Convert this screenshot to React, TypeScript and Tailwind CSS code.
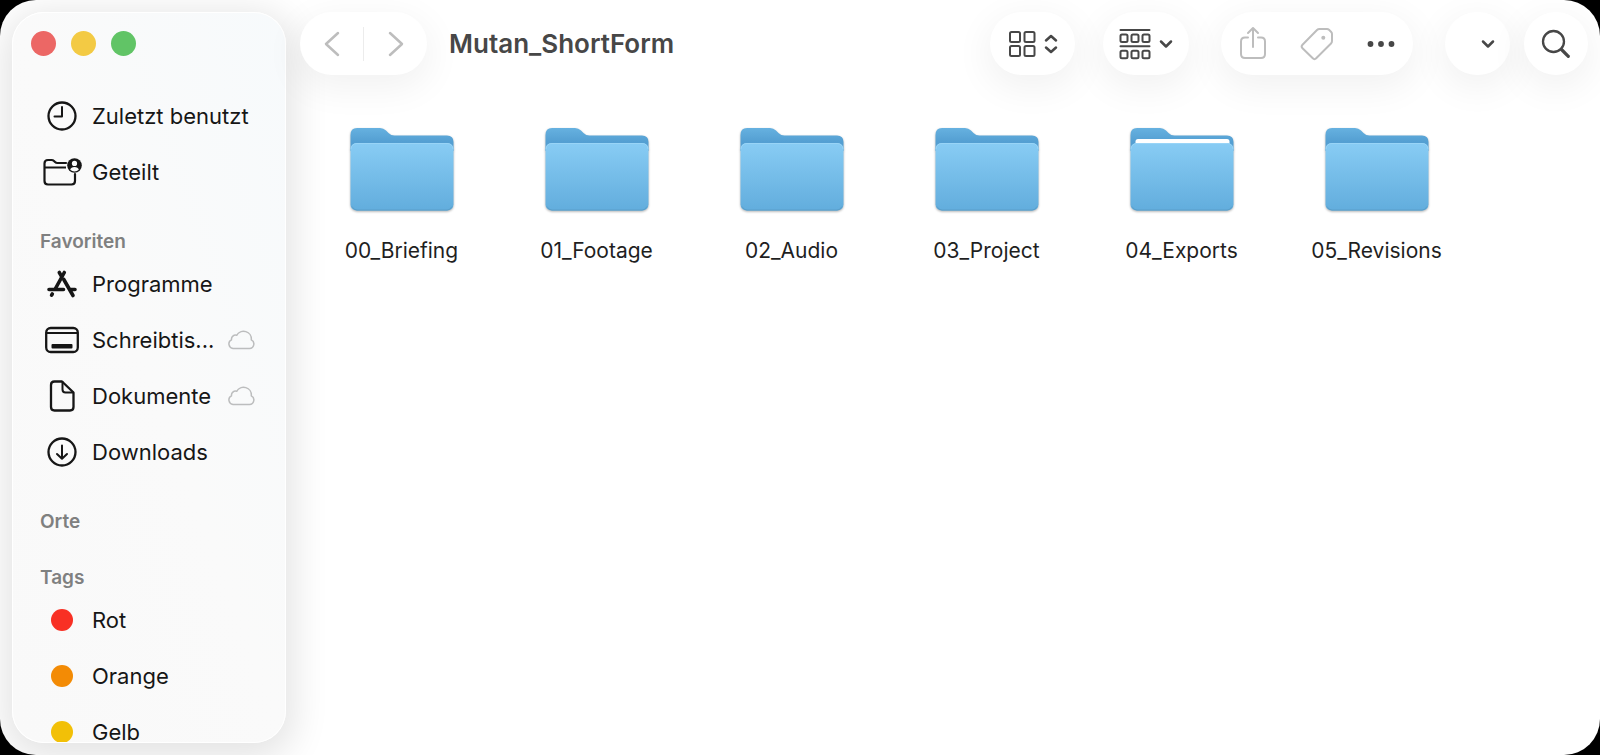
import type { ReactNode } from 'react'

const stroke = {
  fill: 'none',
  stroke: 'currentColor',
  strokeLinecap: 'round' as const,
  strokeLinejoin: 'round' as const,
  'aria-hidden': true,
}

function ClockIcon() {
  return (
    <svg width="32" height="32" viewBox="0 0 32 32" strokeWidth="2.3" {...stroke}>
      <circle cx="16" cy="16" r="13.5" />
      <path d="M16 7V16.500H8.500" strokeWidth="2" />
    </svg>
  )
}

function SharedFolderIcon() {
  return (
    <svg width="40" height="32" viewBox="0 0 40 32" strokeWidth="2.2" {...stroke}>
      <path d="M33 18V25Q33 28.5 29.5 28.5H6Q2.5 28.5 2.5 25V7.5Q2.5 4 6 4H9.5Q11 4 12 5L13 6Q14 7 15.5 7H24" />
      <path d="M3 11.5H24" strokeLinecap="butt" />
      <circle cx="32.5" cy="9.5" r="7.3" fill="currentColor" stroke="none" />
      <circle cx="32.5" cy="7.4" r="2.6" fill="#f9fafa" stroke="none" />
      <path d="M28.2 13.7Q29 11 32.5 11T36.8 13.7Q35 15.4 32.5 15.4T28.2 13.7Z" fill="#f9fafa" stroke="none" />
    </svg>
  )
}

function AppsIcon() {
  return (
    <svg width="32" height="32" viewBox="0 0 32 32" strokeWidth="3.6" {...stroke}>
      <path d="M13.3 4.5L15.7 8.6" />
      <path d="M18.3 4.5L9.5 20.5" />
      <path d="M3 21.5H17.5M25 21.5H29" />
      <path d="M17.8 11.5L27 27.5" />
      <path d="M5.6 27.2L6.3 26" />
    </svg>
  )
}

function DesktopIcon() {
  return (
    <svg width="36" height="32" viewBox="0 0 36 32" strokeWidth="2.3" {...stroke}>
      <rect x="2.2" y="4" width="31.6" height="24" rx="4.5" />
      <path d="M2.5 9H33.5" strokeWidth="2" strokeLinecap="butt" />
      <rect x="7.500" y="20" width="21" height="4.500" rx="1" fill="currentColor" stroke="none" />
    </svg>
  )
}

function DocumentIcon() {
  return (
    <svg width="32" height="34" viewBox="0 0 32 34" strokeWidth="2.3" {...stroke}>
      <path d="M8.5 2.5H16L27.5 13.5V28Q27.5 31.5 24 31.5H8.500Q5 31.5 5 28V6Q5 2.5 8.5 2.5Z" />
      <path d="M16.5 3V10.5Q16.5 13.5 19.5 13.5H27" strokeWidth="2" />
    </svg>
  )
}

function DownloadIcon() {
  return (
    <svg width="32" height="32" viewBox="0 0 32 32" strokeWidth="2.3" {...stroke}>
      <circle cx="16" cy="16" r="13.5" />
      <path d="M16 9.5V22.5M11 18L16 22.800L21 18" strokeWidth="2" />
    </svg>
  )
}

function CloudIcon() {
  return (
    <svg className="shrink-0 text-[#bcbdbe]" width="28" height="20" viewBox="0 0 28 20" strokeWidth="1.5" {...stroke}>
      <path d="M6 18.5H22.5A4.6 4.6 0 0 0 24.3 9.8A7.8 7.8 0 0 0 9.7 5.3A4.1 4.1 0 0 0 4.500 9.8A4.6 4.6 0 0 0 6 18.5Z" />
    </svg>
  )
}

function ChevronDown() {
  return (
    <svg width="14" height="10" viewBox="0 0 14 10" strokeWidth="2.5" {...stroke}>
      <path d="M2 2.5L7 7.5L12 2.5" />
    </svg>
  )
}

function GridIcon() {
  return (
    <svg width="28" height="28" viewBox="0 0 28 28" strokeWidth="2" {...stroke}>
      <rect x="2" y="2" width="10" height="10" rx="1.5" />
      <rect x="16.5" y="2" width="10" height="10" rx="1.5" />
      <rect x="2" y="16" width="10" height="10" rx="1.5" />
      <rect x="16.5" y="16" width="10" height="10" rx="1.5" />
    </svg>
  )
}

function SortIcon() {
  return (
    <svg width="14" height="20" viewBox="0 0 14 20" strokeWidth="2.5" {...stroke}>
      <path d="M2 6.5L7 2L12 6.5M2 13.5L7 18L12 13.5" />
    </svg>
  )
}

function GroupIcon() {
  return (
    <svg width="32" height="32" viewBox="0 0 32 32" strokeWidth="2" {...stroke}>
      <path d="M1.500 2H30.500M1.500 18.300H30.500" />
      <rect x="1.5" y="6.5" width="7" height="7.5" rx="1.5" />
      <rect x="12.5" y="6.5" width="7" height="7.5" rx="1.5" />
      <rect x="23.5" y="6.5" width="7" height="7.5" rx="1.5" />
      <rect x="1.5" y="22.8" width="7" height="7.5" rx="1.5" />
      <rect x="12.5" y="22.8" width="7" height="7.5" rx="1.5" />
      <rect x="23.5" y="22.8" width="7" height="7.5" rx="1.5" />
    </svg>
  )
}

function ShareIcon() {
  return (
    <svg width="28" height="36" viewBox="0 0 28 36" strokeWidth="2" {...stroke}>
      <path d="M9 11.500H6Q2 11.500 2 15.500V28Q2 32 6 32H22Q26 32 26 28V15.500Q26 11.500 22 11.500H19" />
      <path d="M14 21V2M9 7L14 2L19 7" />
    </svg>
  )
}

function TagIcon() {
  return (
    <svg width="34" height="34" viewBox="0 0 34 34" strokeWidth="2" {...stroke}>
      <path d="M19.5 2H27Q28.2 2 29 2.8L31.2 5Q32 5.8 32 7V14Q32 15.5 31 16.5L16.2 31.3Q14.5 33 12.8 31.3L2.5 21.2Q.8 19.5 2.5 17.8L17 3Q18 2 19.5 2Z" />
      <circle cx="23.3" cy="10.8" r="2" fill="currentColor" stroke="none" />
    </svg>
  )
}

function MoreIcon() {
  return (
    <svg width="28" height="8" viewBox="0 0 28 8" fill="currentColor" aria-hidden="true">
      <circle cx="3.5" cy="4" r="2.9" />
      <circle cx="14" cy="4" r="2.9" />
      <circle cx="24.5" cy="4" r="2.9" />
    </svg>
  )
}

function SearchIcon() {
  return (
    <svg width="30" height="30" viewBox="0 0 30 30" strokeWidth="2.3" {...stroke}>
      <circle cx="12.5" cy="12.5" r="10.5" />
      <path d="M20.500 20.500L27.300 27.300" strokeWidth="3.2" />
    </svg>
  )
}

function FolderIcon({ filled }: { filled?: boolean }) {
  return (
    <svg width="106" height="86" viewBox="0 0 106 86" className="drop-shadow-[0_1px_1px_rgba(0,0,0,0.3)]" aria-hidden="true">
      <defs>
        <linearGradient id="folder-back" x1="0" y1="0" x2="0" y2="1">
          <stop offset="0" stopColor="#66b1e0" />
          <stop offset="0.6" stopColor="#549fd2" />
        </linearGradient>
        <linearGradient id="folder-front" x1="0" y1="0" x2="0" y2="1">
          <stop offset="0" stopColor="#88ccf4" />
          <stop offset="1" stopColor="#62addd" />
        </linearGradient>
      </defs>
      <path d="M1.500 8Q1.500 1 8 1H31Q34.500 1 37 3.500L39.500 6Q42 8.500 45.500 8.500H98Q104.500 8.500 104.500 15V24H1.500Z" fill="url(#folder-back)" />
      {filled && <path d="M6.500 18V14.500Q6.500 12 9 12H98Q100.500 12 100.500 14.500V18Z" fill="#fff" />}
      <rect x="1.5" y="16" width="103" height="67.5" rx="6" fill="url(#folder-front)" />
      <path d="M2 22Q2.5 16.5 8 16.5H98Q103.5 16.5 104 22" fill="none" stroke="#98d4f7" strokeWidth="1" />
      <path d="M3 79.5Q4.500 83 8 83H98Q101.500 83 103 79.5" fill="none" stroke="#5a9fca" strokeWidth="1" />
    </svg>
  )
}

type Item = { label: string; icon: ReactNode; cloud?: boolean }

const recents: Item[] = [
  { label: 'Zuletzt benutzt', icon: <ClockIcon /> },
  { label: 'Geteilt', icon: <SharedFolderIcon /> },
]

const favorites: Item[] = [
  { label: 'Programme', icon: <AppsIcon /> },
  { label: 'Schreibtis...', icon: <DesktopIcon />, cloud: true },
  { label: 'Dokumente', icon: <DocumentIcon />, cloud: true },
  { label: 'Downloads', icon: <DownloadIcon /> },
]

const tags: Item[] = [
  { label: 'Rot', icon: <span className="size-[22px] rounded-full bg-[#f83024]" /> },
  { label: 'Orange', icon: <span className="size-[22px] rounded-full bg-[#f38b05]" /> },
  { label: 'Gelb', icon: <span className="size-[22px] rounded-full bg-[#f2c007]" /> },
]

const folders = ['00_Briefing', '01_Footage', '02_Audio', '03_Project', '04_Exports', '05_Revisions']

function SidebarSection({ title, items = [] }: { title?: string; items?: Item[] }) {
  return (
    <section>
      {title && (
        <h2 className="mt-7 flex h-7 items-center pl-[27px] text-[19px] font-semibold text-[#7f8080]">{title}</h2>
      )}
      <ul>
        {items.map((item) => (
          <li key={item.label}>
            <button type="button" className="flex h-14 w-full items-center pr-[30px] pl-[27px] text-left">
              <span className="flex w-11 shrink-0 justify-center">{item.icon}</span>
              <span className="ml-2 flex-1 whitespace-nowrap">{item.label}</span>
              {item.cloud && <CloudIcon />}
            </button>
          </li>
        ))}
      </ul>
    </section>
  )
}

function Pill({ children, className }: { children: ReactNode; className: string }) {
  return (
    <div className={`flex h-[63px] shrink-0 items-center rounded-full bg-white shadow-[0_10px_36px_4px_rgba(0,0,0,0.055)] ${className}`}>
      {children}
    </div>
  )
}

export default function App() {
  return (
    <div className="h-screen bg-black font-['Inter','Liberation_Sans',sans-serif]">
      <div className="flex h-full overflow-hidden rounded-[36px] bg-white">
        <aside className="my-3 ml-3 flex w-[274px] shrink-0 flex-col overflow-hidden rounded-[32px] border border-white bg-linear-to-bl from-[#f7fafc] via-[#fafafa] via-50% to-[#f9f9f9] text-[22px] text-[#161616] shadow-[0_8px_36px_8px_rgba(0,0,0,0.11)]">
          <div className="flex gap-[15px] pt-[18px] pl-[18px]">
            <button type="button" aria-label="Schließen" className="size-[25px] rounded-full bg-[#ec6765]" />
            <button type="button" aria-label="Minimieren" className="size-[25px] rounded-full bg-[#f3ca44]" />
            <button type="button" aria-label="Vergrößern" className="size-[25px] rounded-full bg-[#61c466]" />
          </div>
          <nav className="mt-8">
            <SidebarSection items={recents} />
            <SidebarSection title="Favoriten" items={favorites} />
            <SidebarSection title="Orte" />
            <SidebarSection title="Tags" items={tags} />
          </nav>
        </aside>

        <main className="min-w-0 flex-1">
          <header className="flex items-center pt-3 pr-3 pl-[14px] text-[#474747]">
            <Pill className="w-[127px] text-[#bdbdbd]">
              <button type="button" aria-label="Zurück" className="flex h-full flex-1 items-center justify-center">
                <svg width="16" height="26" viewBox="0 0 16 26" strokeWidth="2.5" {...stroke}>
                  <path d="M14 2L2 13L14 24" />
                </svg>
              </button>
              <span className="h-[34px] w-px bg-[#ececec]" />
              <button type="button" aria-label="Vorwärts" className="flex h-full flex-1 items-center justify-center">
                <svg width="16" height="26" viewBox="0 0 16 26" strokeWidth="2.5" {...stroke}>
                  <path d="M2 2L14 13L2 24" />
                </svg>
              </button>
            </Pill>
            <h1 className="ml-[22px] flex-1 text-[26px] font-semibold">Mutan_ShortForm</h1>
            <Pill className="mr-7 w-[85px]">
              <button type="button" aria-label="Darstellung" className="flex h-full w-full items-center justify-center gap-2">
                <GridIcon />
                <SortIcon />
              </button>
            </Pill>
            <Pill className="mr-8 w-[86px]">
              <button type="button" aria-label="Gruppieren" className="flex h-full w-full items-center justify-center gap-2">
                <GroupIcon />
                <ChevronDown />
              </button>
            </Pill>
            <Pill className="mr-8 w-[192px]">
              <button type="button" aria-label="Teilen" className="flex h-full flex-1 items-center justify-center text-[#bdbdbd]">
                <ShareIcon />
              </button>
              <button type="button" aria-label="Tags bearbeiten" className="flex h-full flex-1 items-center justify-center text-[#bdbdbd]">
                <TagIcon />
              </button>
              <button type="button" aria-label="Mehr" className="flex h-full flex-1 items-center justify-center">
                <MoreIcon />
              </button>
            </Pill>
            <Pill className="mr-[14px] w-[65px]">
              <button type="button" aria-label="Optionen" className="flex h-full w-full items-center justify-end pr-[15px]">
                <ChevronDown />
              </button>
            </Pill>
            <Pill className="w-[64px]">
              <button type="button" aria-label="Suchen" className="flex h-full w-full items-center justify-center">
                <SearchIcon />
              </button>
            </Pill>
          </header>

          <ul className="grid grid-cols-[repeat(auto-fill,195px)] pt-[52px] pl-[18px]">
            {folders.map((name) => (
              <li key={name}>
                <button type="button" className="flex w-full flex-col items-center gap-6 text-[21px] leading-7 text-[#1f1f1f]">
                  <FolderIcon filled={name === '04_Exports'} />
                  {name}
                </button>
              </li>
            ))}
          </ul>
        </main>
      </div>
    </div>
  )
}
